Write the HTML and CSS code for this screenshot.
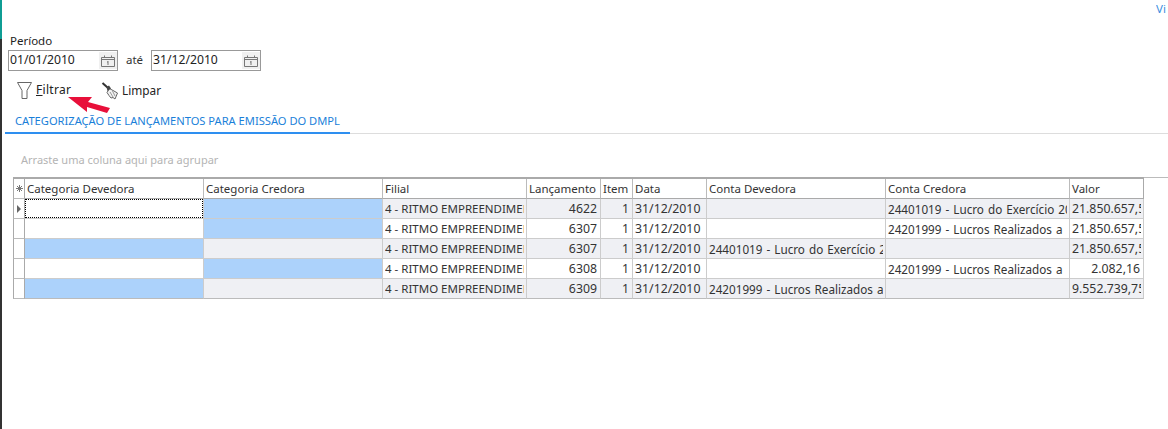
FILE: index.html
```html
<!DOCTYPE html>
<html lang="pt">
<head>
<meta charset="utf-8">
<title>DMPL</title>
<link rel="stylesheet" href="styles.css">
</head>
<body>
<div class="strip"></div>
<main class="page">
  <div class="topbar"><span class="vi">Vi</span></div>
  <section class="period">
    <label class="period-label">Período</label>
    <div class="period-row">
      <div class="date"><span>01/01/2010</span><span class="cal"><svg width="14" height="12" viewBox="0 0 14 12"><path d="M.5 2.500h13v9H.5zM.5 4.500h13M3.500 .5v2M10.500 .5v2M7 6v4M6 7h1" fill="none" stroke="#777"/></svg></span></div>
      <span class="ate">até</span>
      <div class="date"><span>31/12/2010</span><span class="cal"><svg width="14" height="12" viewBox="0 0 14 12"><path d="M.5 2.500h13v9H.5zM.5 4.500h13M3.500 .5v2M10.500 .5v2M7 6v4M6 7h1" fill="none" stroke="#777"/></svg></span></div>
    </div>
  </section>
  <div class="toolbar">
    <button class="tool filter"><svg width="15" height="17" viewBox="0 0 15 17"><path d="M.5 .5h14L10 8.500v8H5v-8z" fill="#fff" stroke="#666"/></svg><span><u>F</u>iltrar</span></button>
    <button class="tool clear"><svg width="18" height="18" viewBox="0 0 18 18"><path d="M1.500 1l5 4.500" stroke="#333" stroke-width="2"/><path d="M8.500 6.500l8 4.500-2.500 6-2-1.500-2 .5-2-2.500-2-3z" fill="#f2f2f2" stroke="#666"/><path d="M5.500 5l2.500-1.500 2 3-3.500 2.500z" fill="#444"/><path d="M9 10l3 5M11.500 9l2.500 5" stroke="#999" fill="none"/></svg><span>Limpar</span></button>
    <svg class="arrow" width="42" height="16" viewBox="0 0 42 16"><path d="M0 0h24l-4 5 22 6-3 5-20-6v5z" fill="#e8103a"/></svg>
  </div>
  <nav class="tabs"><span class="tab">CATEGORIZAÇÃO DE LANÇAMENTOS PARA EMISSÃO DO DMPL</span></nav>
  <div class="groupbar">Arraste uma coluna aqui para agrupar</div>
  <div class="gridline"></div>
  <table class="grid">
    <colgroup>
      <col class="c0"><col class="c1"><col class="c2"><col class="c3"><col class="c4"><col class="c5"><col class="c6"><col class="c7"><col class="c8"><col class="c9">
    </colgroup>
    <thead>
      <tr><th class="ind"><svg class="star" width="7" height="7" viewBox="0 0 7 7"><path d="M3.500 0v7M0 3.500h7M1 1l5 5M6 1l-5 5" stroke="#777"/></svg></th><th>Categoria Devedora</th><th>Categoria Credora</th><th>Filial</th><th>Lançamento</th><th>Item</th><th>Data</th><th>Conta Devedora</th><th>Conta Credora</th><th>Valor</th></tr>
    </thead>
    <tbody>
      <tr class="alt"><td class="ind"><span class="caret"></span></td><td class="focus"><div class="focus-box"></div></td><td class="blue"></td><td><div class="clip">4 - RITMO EMPREENDIMENTOS</div></td><td class="num digits">4622</td><td class="num digits">1</td><td class="digits">31/12/2010</td><td></td><td class="conta"><div class="clip">24401019 - Lucro do Exercício 2010</div></td><td class="digits"><div class="clip">21.850.657,58</div></td></tr>
      <tr><td class="ind"></td><td></td><td class="blue"></td><td><div class="clip">4 - RITMO EMPREENDIMENTOS</div></td><td class="num digits">6307</td><td class="num digits">1</td><td class="digits">31/12/2010</td><td></td><td class="conta"><div class="clip">24201999 - Lucros Realizados a&nbsp; Distribuir</div></td><td class="digits"><div class="clip">21.850.657,58</div></td></tr>
      <tr class="alt"><td class="ind"></td><td class="blue"></td><td></td><td><div class="clip">4 - RITMO EMPREENDIMENTOS</div></td><td class="num digits">6307</td><td class="num digits">1</td><td class="digits">31/12/2010</td><td class="conta"><div class="clip">24401019 - Lucro do Exercício 2010</div></td><td></td><td class="digits"><div class="clip">21.850.657,58</div></td></tr>
      <tr><td class="ind"></td><td></td><td class="blue"></td><td><div class="clip">4 - RITMO EMPREENDIMENTOS</div></td><td class="num digits">6308</td><td class="num digits">1</td><td class="digits">31/12/2010</td><td></td><td class="conta"><div class="clip">24201999 - Lucros Realizados a&nbsp; Distribuir</div></td><td class="num digits">2.082,16</td></tr>
      <tr class="alt"><td class="ind"></td><td class="blue"></td><td></td><td><div class="clip">4 - RITMO EMPREENDIMENTOS</div></td><td class="num digits">6309</td><td class="num digits">1</td><td class="digits">31/12/2010</td><td class="conta"><div class="clip">24201999 - Lucros Realizados a Distribuir</div></td><td></td><td class="digits"><div class="clip">9.552.739,75</div></td></tr>
    </tbody>
  </table>
</main>
</body>
</html>
```
FILE: styles.css
```css
* { box-sizing: border-box; }
html, body { margin: 0; height: 100%; background: #fff; overflow: hidden; }
body { display: flex; font: 11.5px "Noto Sans", "Open Sans", sans-serif; color: #333; }
.strip { width: 2px; flex: none; background: linear-gradient(#0f9d94 0 39px, #333 39px); }
.page { flex: 1; min-width: 0; display: flex; flex-direction: column; }
.topbar { height: 33px; display: flex; justify-content: flex-end; padding-top: 1px; }
.vi { color: #3b8fe0; width: 12px; overflow: hidden; }
.period { padding-left: 6px; }
.period-label { display: block; height: 17px; line-height: 15px; padding-left: 2px; color: #222; }
.period-row { display: flex; align-items: center; height: 21px; }
.date { width: 110px; height: 21px; border: 1px solid #999; display: flex; align-items: center; justify-content: space-between; padding-left: 1px; font-size: 12.200px; line-height: 17px; color: #222; }
.date > span:first-child { margin-top: -2px; }
.cal { width: 18px; height: 17px; background: #f0f0f0; display: flex; align-items: center; justify-content: center; }
.ate { width: 33px; text-align: center; margin-top: -2px; }
.toolbar { position: relative; display: flex; height: 38px; padding: 11px 0 0 15px; }
.tool { border: 0; background: none; padding: 0; font: inherit; font-size: 12px; color: #222; display: flex; align-items: flex-start; gap: 4px; }
.filter { width: 84px; letter-spacing: .3px; }
.clear { gap: 3px; font-size: 11.800px; }
.tool span { line-height: 14px; margin-top: 1px; }
.arrow { position: absolute; left: 66px; top: 26px; }
.tabs { height: 25px; margin-left: 3px; border-bottom: 1px solid #ddd; }
.tab { display: inline-block; height: 25px; border-bottom: 2px solid #2e8ff0; color: #1a7fd9; padding: 4px 10px 0; line-height: 15px; font-size: 11.150px; }
.groupbar { height: 43px; padding: 18px 0 0 19px; color: #b4b4b4; line-height: 15px; font-size: 11px; }
.gridline { height: 2px; margin-left: 11px; background: linear-gradient(#aaa, #aaa) 0 0 / 1131px 2px no-repeat, linear-gradient(#bbb, #bbb) 0 0 / 100% 1px no-repeat; }
.grid { border-collapse: separate; border-spacing: 0; table-layout: fixed; width: 1131px; margin-left: 11px; font-size: 11.500px; }
.c0 { width: 12px; } .c1, .c2 { width: 179px; } .c3 { width: 144px; } .c4 { width: 74px; } .c5 { width: 32px; } .c6 { width: 74px; } .c7 { width: 179px; } .c8 { width: 184px; } .c9 { width: 74px; }
.grid th, .grid td { height: 20px; padding: 0 2px; border-right: 1px solid #ccc; border-bottom: 1px solid #ccc; overflow: hidden; white-space: nowrap; font-weight: 400; text-align: left; line-height: 14px; }
.grid th { border-bottom-color: #aaa; border-right-color: #bbb; }
.grid th:last-child { border-right-color: #aaa; }
.grid .ind { padding: 0; border-left: 1px solid #aaa; border-right: 1px solid #aaa; border-bottom-color: #bbb; background: #fff; }
.grid tbody tr:last-child td { border-bottom-color: #bbb; }
.grid .digits { font-size: 12.300px; }
.grid .conta { font-size: 11.700px; word-spacing: 1px; }
.star { display: block; margin: 0 auto; }
.caret { display: block; width: 0; height: 0; margin-left: 3px; border-left: 4px solid #666; border-top: 4px solid transparent; border-bottom: 4px solid transparent; }
.alt td { background: #eff0f4; }
.grid td.blue { background: #acd2fb; }
.grid td.focus { background: #fff; padding: 0; }
.focus-box { height: 19px; border: 1px dotted #000; }
.clip { overflow: hidden; white-space: nowrap; }
.grid .num { text-align: right; padding-right: 3px; }
```
